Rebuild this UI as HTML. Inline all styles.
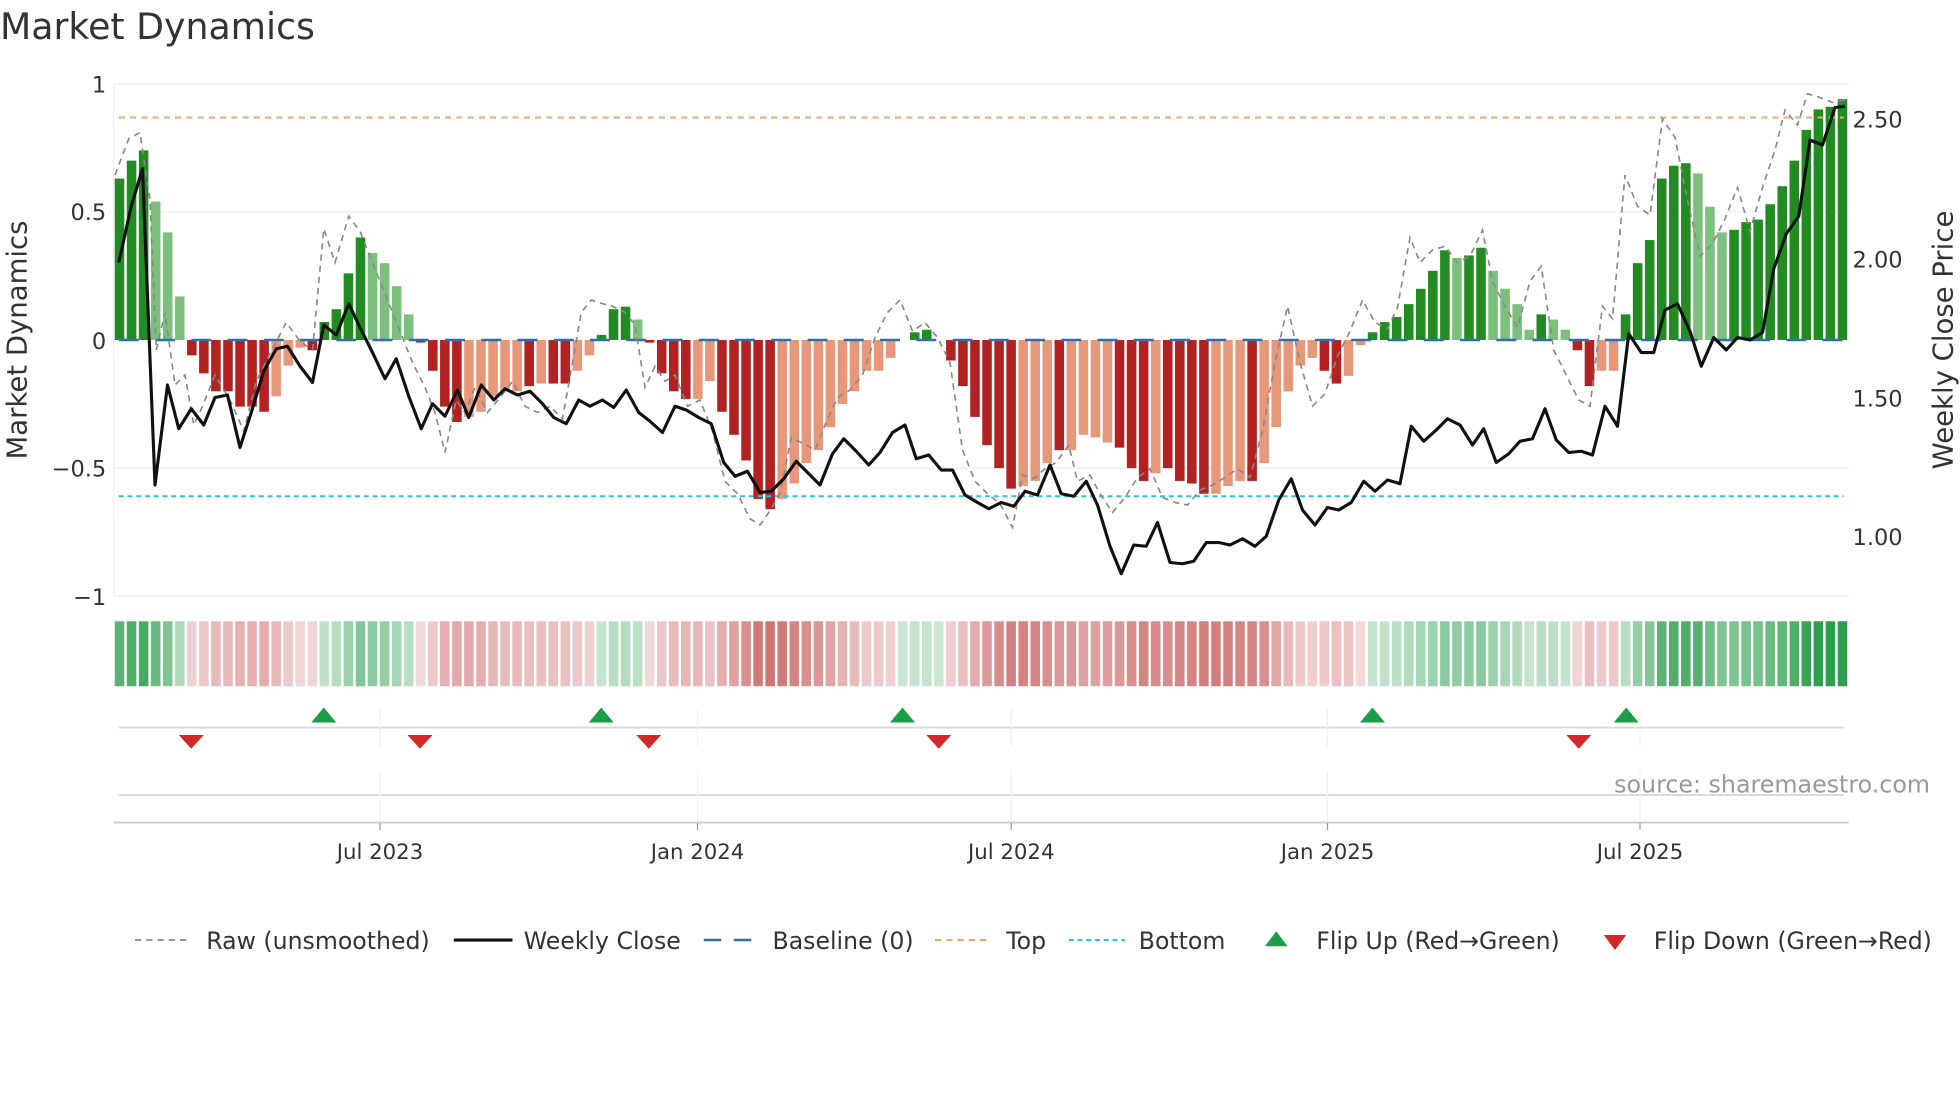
<!DOCTYPE html>
<html><head><meta charset="utf-8"><style>
html,body{margin:0;padding:0;background:#fff;}
svg{display:block;font-family:"DejaVu Sans","Liberation Sans",sans-serif;}
</style></head><body>
<svg id="s" width="1960" height="1102" viewBox="0 0 1568 881.6" xmlns="http://www.w3.org/2000/svg">
<rect width="1568" height="882" fill="#fff"/>
<text x="0" y="31" font-size="29" fill="#333">Market Dynamics</text>
<g stroke="#eeeeee" stroke-width="1">
<line x1="91" y1="67" x2="1479" y2="67"/><line x1="91" y1="169.5" x2="1479" y2="169.5"/>
<line x1="91" y1="374.5" x2="1479" y2="374.5"/><line x1="91" y1="477" x2="1479" y2="477"/>
<line x1="91" y1="67" x2="91" y2="477"/>
</g>
<g font-size="18" fill="#333" text-anchor="end">
<text x="85" y="74">1</text><text x="85" y="176">0.5</text><text x="85" y="279">0</text>
<text x="85" y="381">−0.5</text><text x="85" y="484">−1</text>
</g>
<g font-size="18" fill="#333">
<text x="1482" y="102">2.50</text><text x="1482" y="214">2.00</text><text x="1482" y="325">1.50</text><text x="1482" y="436">1.00</text>
</g>
<text transform="translate(21,272) rotate(-90)" font-size="22" fill="#333" text-anchor="middle">Market Dynamics</text>
<text transform="translate(1562,272) rotate(-90)" font-size="22" fill="#333" text-anchor="middle">Weekly Close Price</text>
<g id="bars"></g>
<line x1="95" y1="272" x2="1475" y2="272" stroke="#2f6fb0" stroke-width="2" stroke-dasharray="16,13"/>
<line x1="95" y1="94" x2="1475" y2="94" stroke="#f0a868" stroke-width="1.6" stroke-dasharray="5,4"/>
<line x1="95" y1="397" x2="1475" y2="397" stroke="#2bc4d8" stroke-width="1.6" stroke-dasharray="4,3"/>
<polyline id="raw" fill="none" stroke="#888" stroke-width="1.3" stroke-dasharray="5,4"/>
<polyline id="px" fill="none" stroke="#111" stroke-width="2.5" stroke-linejoin="round"/>
<g id="strip"></g>
<g stroke="#d9d9d9" stroke-width="1.5">
<line x1="95" y1="582" x2="1475" y2="582"/><line x1="95" y1="636" x2="1475" y2="636"/>
</g>
<line x1="91" y1="658" x2="1479" y2="658" stroke="#ccc" stroke-width="1.5"/>
<g stroke="#eef0f3" stroke-width="1">
<line x1="304" y1="567" x2="304" y2="598"/><line x1="558" y1="567" x2="558" y2="598"/><line x1="809" y1="567" x2="809" y2="598"/><line x1="1062" y1="567" x2="1062" y2="598"/><line x1="1312" y1="567" x2="1312" y2="598"/>
<line x1="304" y1="617" x2="304" y2="658"/><line x1="558" y1="617" x2="558" y2="658"/><line x1="809" y1="617" x2="809" y2="658"/><line x1="1062" y1="617" x2="1062" y2="658"/><line x1="1312" y1="617" x2="1312" y2="658"/>
</g>
<g stroke="#999" stroke-width="1">
<line x1="304" y1="658" x2="304" y2="664"/><line x1="558" y1="658" x2="558" y2="664"/><line x1="809" y1="658" x2="809" y2="664"/><line x1="1062" y1="658" x2="1062" y2="664"/><line x1="1312" y1="658" x2="1312" y2="664"/>
</g>
<g font-size="17" fill="#333" text-anchor="middle">
<text x="304" y="687">Jul 2023</text><text x="558" y="687">Jan 2024</text><text x="809" y="687">Jul 2024</text><text x="1062" y="687">Jan 2025</text><text x="1312" y="687">Jul 2025</text>
</g>
<text x="1544" y="634" font-size="19" fill="#999" text-anchor="end">source: sharemaestro.com</text>
<g id="flips"></g>
<g font-size="18.9" fill="#333">
<line x1="108" y1="752" x2="153" y2="752" stroke="#888" stroke-width="1.4" stroke-dasharray="5,4"/>
<text x="165" y="759">Raw (unsmoothed)</text>
<line x1="363" y1="752" x2="410" y2="752" stroke="#111" stroke-width="2.5"/>
<text x="419" y="759">Weekly Close</text>
<line x1="563" y1="752" x2="606" y2="752" stroke="#2f6fb0" stroke-width="2" stroke-dasharray="14,10"/>
<text x="618" y="759">Baseline (0)</text>
<line x1="748" y1="752" x2="793" y2="752" stroke="#f0a868" stroke-width="1.6" stroke-dasharray="5,4"/>
<text x="805" y="759">Top</text>
<line x1="855" y1="752" x2="900" y2="752" stroke="#2bc4d8" stroke-width="1.6" stroke-dasharray="4,3"/>
<text x="911" y="759">Bottom</text>
<polygon points="1012,757 1030,757 1021,745" fill="#1a9e48"/>
<text x="1053" y="759">Flip Up (Red→Green)</text>
<polygon points="1283,748 1301,748 1292,760" fill="#d62728"/>
<text x="1323" y="759">Flip Down (Green→Red)</text>
</g>
</svg>
<script>
var V=[[.63,1],[.70,1],[.74,1],[.54,0],[.42,0],[.17,0],[-.06,1],[-.13,1],[-.20,1],[-.20,1],[-.26,1],[-.26,1],[-.28,1],[-.22,0],[-.10,0],[-.03,0],[-.04,1],[.07,1],[.12,1],[.26,1],[.40,1],[.34,0],[.30,0],[.21,0],[.10,0],[-.01,1],[-.12,1],[-.26,1],[-.32,1],[-.30,0],[-.28,0],[-.22,0],[-.20,0],[-.20,0],[-.18,1],[-.17,0],[-.17,1],[-.17,1],[-.12,0],[-.06,0],[.02,1],[.12,1],[.13,1],[.08,0],[-.01,1],[-.13,1],[-.20,1],[-.23,1],[-.23,0],[-.16,0],[-.28,1],[-.37,1],[-.47,1],[-.62,1],[-.66,1],[-.62,0],[-.56,0],[-.48,0],[-.43,0],[-.34,0],[-.25,0],[-.20,0],[-.12,0],[-.12,0],[-.07,0],[0,0],[.03,1],[.04,1],[0,0],[-.08,1],[-.18,1],[-.30,1],[-.41,1],[-.50,1],[-.58,1],[-.57,0],[-.55,0],[-.48,0],[-.43,1],[-.43,0],[-.37,0],[-.38,0],[-.40,0],[-.42,1],[-.50,1],[-.55,1],[-.52,0],[-.50,1],[-.55,1],[-.56,1],[-.60,1],[-.60,0],[-.57,0],[-.55,0],[-.55,1],[-.48,0],[-.34,0],[-.20,0],[-.10,0],[-.07,0],[-.12,1],[-.17,1],[-.14,0],[-.02,0],[.03,1],[.07,1],[.09,1],[.14,1],[.20,1],[.27,1],[.35,1],[.32,0],[.33,1],[.36,1],[.27,0],[.20,0],[.14,0],[.04,0],[.10,1],[.08,0],[.04,0],[-.04,1],[-.18,1],[-.12,0],[-.12,0],[.10,1],[.30,1],[.39,1],[.63,1],[.68,1],[.69,1],[.65,0],[.52,0],[.42,0],[.43,1],[.46,1],[.47,1],[.53,1],[.60,1],[.70,1],[.82,1],[.90,1],[.91,1],[.94,1]];
var ns="http://www.w3.org/2000/svg",P=(1479-91)/V.length;
function el(t,a,p){var e=document.createElementNS(ns,t);for(var k in a)e.setAttribute(k,a[k]);p.appendChild(e);return e;}
var B=document.getElementById('bars'),S=document.getElementById('strip');
V.forEach(function(d,i){var v=d[0],x=91+i*P+0.8,w=P-2;if(v!=0){var h=Math.abs(v)*205;var c=v>0?(d[1]?'#228b22':'#7dc07d'):(d[1]?'#b22222':'#e8987a');el('rect',{x:x,y:v>0?272-h:272,width:w,height:h,fill:c},B);}
var a=Math.min(1,0.22+Math.abs(v)*0.95);if(v>=0)a=Math.min(1,0.25+v*0.85);el('rect',{x:x,y:497,width:w,height:52,fill:v>=0?'#2e9e4f':'#c85a5a','fill-opacity':a.toFixed(2)},S);});
var px="95,210 105,165 114,135 124,388 134,308 143,343 153,327 163,340 172,318 182,316 192,358 201,330 211,297 221,279 230,277 240,293 250,306 259,260 269,268 279,243 288,262 298,282 308,303 317,287 327,317 337,343 346,323 356,333 366,312 375,334 385,308 395,320 404,311 414,316 424,313 434,323 443,334 453,339 463,320 472,325 482,320 491,326 501,312 511,330 520,337 530,346 540,325 549,328 559,334 569,339 579,370 588,381 598,377 608,394 617,393 627,383 637,369 646,378 656,388 666,363 675,351 685,361 695,372 704,362 714,346 724,340 733,367 743,364 753,376 762,376 772,396 782,402 791,407 801,402 811,405 820,393 830,396 840,372 849,395 859,397 869,385 878,404 888,437 897,459 907,436 917,437 926,418 936,450 946,451 955,449 965,434 975,434 984,436 994,431 1004,437 1013,429 1023,400 1033,383 1042,408 1052,420 1062,406 1071,408 1081,402 1091,385 1100,393 1110,384 1120,387 1129,341 1139,353 1149,344 1158,335 1168,340 1178,356 1187,343 1197,370 1207,363 1216,353 1226,351 1236,327 1245,352 1255,362 1265,361 1274,364 1284,325 1294,341 1303,267 1313,282 1323,282 1332,248 1342,243 1352,265 1361,293 1371,270 1381,280 1390,270 1400,272 1410,266 1419,215 1429,187 1439,173 1448,112 1458,116 1468,86 1476,85";
document.getElementById('px').setAttribute('points',px);
var raw="92,140 103,111 112,106 120,160 125,280 132,250 140,308 148,300 155,340 162,325 172,300 185,322 195,345 205,305 215,285 229,258 240,273 250,280 259,183 268,210 279,173 288,185 298,210 310,240 320,265 330,290 340,310 348,330 356,362 365,320 372,330 380,310 390,330 400,318 410,305 420,325 430,330 440,325 450,335 458,290 465,250 473,240 482,243 490,245 500,250 508,260 516,310 524,293 532,305 540,300 550,325 560,320 570,345 580,385 590,395 600,415 608,420 615,410 624,395 633,350 643,355 652,360 660,340 670,318 680,312 690,300 700,270 710,250 720,240 730,265 740,258 750,270 760,290 770,360 780,385 790,395 800,403 810,422 818,380 827,383 836,375 845,370 855,356 862,385 872,380 880,395 890,410 900,398 910,382 920,375 930,398 940,402 950,404 960,392 970,388 980,382 990,375 1000,382 1010,345 1020,290 1030,245 1040,290 1050,325 1060,315 1070,285 1080,265 1090,240 1100,258 1110,263 1118,246 1128,190 1136,210 1146,200 1156,197 1166,210 1176,205 1186,184 1194,225 1204,245 1214,262 1224,225 1233,213 1243,280 1253,300 1263,320 1272,325 1282,245 1290,255 1300,140 1310,165 1320,172 1330,95 1340,110 1350,160 1360,205 1370,195 1380,175 1390,150 1400,185 1410,150 1420,120 1428,88 1438,100 1446,75 1456,78 1466,82 1476,80";
document.getElementById('raw').setAttribute('points',raw);
var F=document.getElementById('flips');
[259,481,722,1098,1301].forEach(function(x){el('polygon',{points:(x-10)+',578 '+(x+10)+',578 '+x+',566',fill:'#1a9e48'},F);});
[153,336,519,751,1263].forEach(function(x){el('polygon',{points:(x-10)+',588 '+(x+10)+',588 '+x+',599',fill:'#d62728'},F);});
</script>
</body></html>
